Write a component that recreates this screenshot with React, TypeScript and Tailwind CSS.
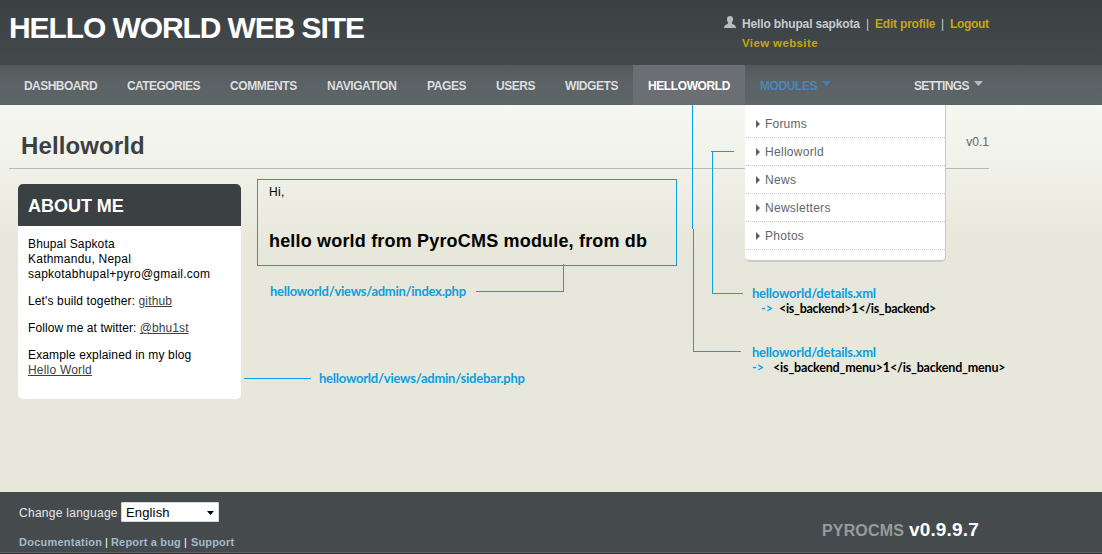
import React from "react";

const navItems = [
  { label: "DASHBOARD", box: "w-[103px]", track: "tracking-[-0.55px]" },
  { label: "CATEGORIES", box: "w-[103px]", track: "tracking-[-0.56px]" },
  { label: "COMMENTS", box: "w-[97px]", track: "tracking-[-0.4px]" },
  { label: "NAVIGATION", box: "w-[100px]", track: "tracking-[-0.4px]" },
  { label: "PAGES", box: "w-[69px]", track: "tracking-[-0.4px]" },
  { label: "USERS", box: "w-[69px]", track: "tracking-[-0.45px]" },
  { label: "WIDGETS", box: "w-[83px]", track: "tracking-[-0.42px]" },
];

const modules = [
  { label: "Forums", track: "tracking-[0.2px]" },
  { label: "Helloworld", track: "tracking-[0.3px]" },
  { label: "News", track: "tracking-[0.3px]" },
  { label: "Newsletters", track: "tracking-[0.27px]" },
  { label: "Photos", track: "tracking-[0.3px]" },
];

function Caret({ className }: { className: string }) {
  return (
    <svg width="9" height="5" viewBox="0 0 9 5" className={className}>
      <path d="M0 0h9L4.5 5z" fill="currentColor" />
    </svg>
  );
}

function Header() {
  return (
    <header className="flex h-[65px] justify-between bg-linear-to-b from-[#3b4043] to-[#434a4c] pl-[9px] pr-[113px]">
      <h1 className="mt-[10px] text-[30px] leading-[36px] font-bold tracking-[-1.09px] text-white">
        HELLO WORLD WEB SITE
      </h1>
      <div className="mt-[14px] flex w-[265px] text-[12px] leading-[20px] font-bold whitespace-nowrap">
        <svg width="12" height="12" viewBox="0 0 12 12" className="mt-[2px] mr-[6px] shrink-0 text-[#b9bcbd]">
          <path
            d="M6 0C4 0 3 1.200 3 3c0 1.800.5 3 1.200 3.800C4.200 8 3.200 8.200 2 8.700.8 9.200.2 10.200 0 12h12c-.2-1.800-.8-2.800-2-3.300C8.800 8.200 7.800 8 7.800 6.800 8.500 6 9 4.800 9 3 9 1.200 8 0 6 0z"
            fill="currentColor"
          />
        </svg>
        <div>
          <div className="flex text-[#c6cbce]">
            <span className="w-[124px] tracking-[-0.14px]">Hello bhupal sapkota</span>
            <span className="w-[9px] font-normal">|</span>
            <span className="w-[66px] tracking-[-0.2px] text-[#c4a712]">Edit profile</span>
            <span className="w-[9px] font-normal">|</span>
            <span className="tracking-[-0.32px] text-[#c4a712]">Logout</span>
          </div>
          <div className="text-[11.5px] leading-[18px] tracking-[0.38px] text-[#c4a712]">View website</div>
        </div>
      </div>
    </header>
  );
}

function ModulesMenu() {
  return (
    <ul className="absolute top-[40px] left-0 z-10 h-[157px] w-[201px] rounded-b-[5px] border-r border-b-2 border-[#c9cacc] bg-white font-normal">
      {modules.map((m) => (
        <li
          key={m.label}
          className="ml-px flex h-[28px] items-center border-b border-dotted border-[#c8c8c8] pt-[9px] pb-[9px] pl-[10px] text-[12px] leading-none text-[#61666b] first:h-[33px] first:pt-[14px]"
        >
          <svg width="4" height="8" viewBox="0 0 4 8" className="mr-[5px]">
            <path d="M0 0L4 4 0 8z" fill="#596166" />
          </svg>
          <span className={m.track}>{m.label}</span>
        </li>
      ))}
    </ul>
  );
}

function Nav() {
  return (
    <nav className="flex h-[40px] bg-linear-to-b from-[#50585a] via-[#5a6164] via-30% to-[#5f6668] pl-[9px] text-[12px] leading-[43px] font-bold text-[#dcdedf]">
      {navItems.map((n) => (
        <a key={n.label} className={`h-[40px] pl-[15px] ${n.box} ${n.track}`}>
          {n.label}
        </a>
      ))}
      <a className="h-[40px] w-[112px] bg-[#6b6f73] pl-[15px] tracking-[-0.4px] text-white">HELLOWORLD</a>
      <div className="relative flex h-[40px] w-[154px] pl-[15px] text-[#4a86b4]">
        <span className="w-[62px] tracking-[-0.4px]">MODULES</span>
        <Caret className="mt-[16px] text-[#4580b3]" />
        <ModulesMenu />
      </div>
      <a className="flex h-[40px] pl-[15px]">
        <span className="w-[60px] tracking-[-0.66px]">SETTINGS</span>
        <Caret className="mt-[16px] text-[#b9bcbe]" />
      </a>
    </nav>
  );
}

function Sidebar() {
  return (
    <aside className="h-[215px] w-[223px] overflow-hidden rounded-[5px] bg-white text-[12px] leading-[15px] text-black">
      <h2 className="h-[42px] bg-[#3b4043] pl-[10px] text-[18px] leading-[44px] font-bold text-white">
        <span className="tracking-[-0.02px]">ABOUT ME</span>
      </h2>
      <div className="flex flex-col gap-[12px] pt-[11px] pl-[10px]">
        <p>
          <span className="tracking-[0.14px]">Bhupal Sapkota</span>
          <br />
          <span className="tracking-[0.23px]">Kathmandu, Nepal</span>
          <br />
          <span className="tracking-[0.25px]">sapkotabhupal+pyro@gmail.com</span>
        </p>
        <p className="tracking-[0.13px]">
          Let's build together: <a className="text-[#3b4043] underline">github</a>
        </p>
        <p className="tracking-[0.08px]">
          Follow me at twitter: <a className="text-[#3b4043] underline">@bhu1st</a>
        </p>
        <p className="tracking-[0.14px]">
          Example explained in my blog
          <br />
          <a className="tracking-[0.2px] text-[#3b4043] underline">Hello World</a>
        </p>
      </div>
    </aside>
  );
}

function Annotations() {
  return (
    <div className="pointer-events-none absolute inset-0 z-20 font-[Lato,sans-serif] text-[13px] leading-[15px] font-bold whitespace-nowrap text-[#0c9fe0]">
      <svg width="1102" height="554" viewBox="0 0 1102 554" className="absolute inset-0" shapeRendering="crispEdges">
        <path
          d="M692.5 105V229M693.500 229V351.500H741M711 151.500H734M712.500 151V294M712 293.500H743M563.500 264V291.500H476M244 378.500H311"
          fill="none"
          stroke="#0ca1e2"
        />
      </svg>
      <span className="absolute top-[284px] left-[270px] tracking-[-0.27px]">helloworld/views/admin/index.php</span>
      <span className="absolute top-[371px] left-[319px] tracking-[-0.24px]">helloworld/views/admin/sidebar.php</span>
      <div className="absolute top-[286px] left-[752px]">
        <div className="tracking-[-0.22px]">helloworld/details.xml</div>
        <div className="flex pl-[9px] text-[12.5px]">
          <span className="w-[18px]">-&gt;</span>
          <span className="tracking-[-0.28px] text-black">&lt;is_backend&gt;1&lt;/is_backend&gt;</span>
        </div>
      </div>
      <div className="absolute top-[345px] left-[752px]">
        <div className="tracking-[-0.22px]">helloworld/details.xml</div>
        <div className="flex text-[12.5px]">
          <span className="w-[21px]">-&gt;</span>
          <span className="tracking-[-0.17px] text-black">&lt;is_backend_menu&gt;1&lt;/is_backend_menu&gt;</span>
        </div>
      </div>
    </div>
  );
}

function Footer() {
  return (
    <footer className="flex h-[62px] justify-between border-b border-[#2b2f31] bg-[#454b4d] pr-[123px] pl-[19px] shadow-[inset_0_-1px_0_#5d6365]">
      <div>
        <label className="mt-[10px] flex h-[20px] items-start text-[12px] leading-[22px] text-[#e8e8e8]">
          <span className="w-[102px] tracking-[0.27px]">Change language</span>
          <span className="flex h-[20px] w-[98px] items-center justify-between rounded-[1px] border border-[#d5d8dc] bg-white pr-[4px] pl-[4px] text-[13px] text-black">
            <span className="pt-[2px] tracking-[0.15px]">English</span>
            <svg width="7" height="4" viewBox="0 0 7 4" className="mt-[2px]">
              <path d="M0 0h7L3.500 4z" fill="#000" />
            </svg>
          </span>
        </label>
        <div className="mt-[12px] flex text-[11px] leading-[16px] font-bold whitespace-nowrap text-[#a3bacb]">
          <span className="w-[86px] tracking-[0.24px]">Documentation</span>
          <span className="w-[6px] font-normal text-white">|</span>
          <span className="w-[73px] tracking-[0.18px]">Report a bug</span>
          <span className="w-[7px] font-normal text-white">|</span>
          <span className="tracking-[0.15px]">Support</span>
        </div>
      </div>
      <div className="mt-[26px] flex items-baseline font-bold">
        <span className="w-[87px] text-[16px] leading-[24px] tracking-[0.15px] text-[#989b9b]">PYROCMS</span>
        <span className="w-[70px] text-[19px] leading-[24px] tracking-[0.15px] text-white">v0.9.9.7</span>
      </div>
    </footer>
  );
}

export default function App() {
  return (
    <div className="relative h-[554px] w-[1102px] overflow-hidden bg-[#e7e7db] font-['Liberation_Sans',Arial,sans-serif]">
      <Header />
      <Nav />
      <main className="h-[387px] bg-[#e7e7db] bg-linear-to-b from-[#f7f8f2] to-[#e7e7db] to-[145px] pl-[9px]">
        <div className="flex h-[64px] w-[980px] justify-between border-b border-[#b9b9b5] pl-[12px]">
          <h2 className="mt-[26px] text-[24px] leading-[30px] font-bold tracking-[0.1px] text-[#3b4043]">Helloworld</h2>
          <span className="mt-[29px] text-[12px] leading-[16px] text-[#62666a]">v0.1</span>
        </div>
        <div className="flex items-start pt-[10px] pl-[9px]">
          <div className="pt-[5px]">
            <Sidebar />
          </div>
          <section className="ml-[16px] h-[87px] w-[420px] border border-[#0ca1e2] pl-[11px] text-black">
            <p className="mt-[4px] text-[12px] leading-[16px] tracking-[0.3px]">Hi,</p>
            <h3 className="mt-[30px] text-[18px] leading-[22px] font-bold tracking-[0.18px] whitespace-nowrap">
              hello world from PyroCMS module, from db
            </h3>
          </section>
        </div>
      </main>
      <Footer />
      <Annotations />
    </div>
  );
}
